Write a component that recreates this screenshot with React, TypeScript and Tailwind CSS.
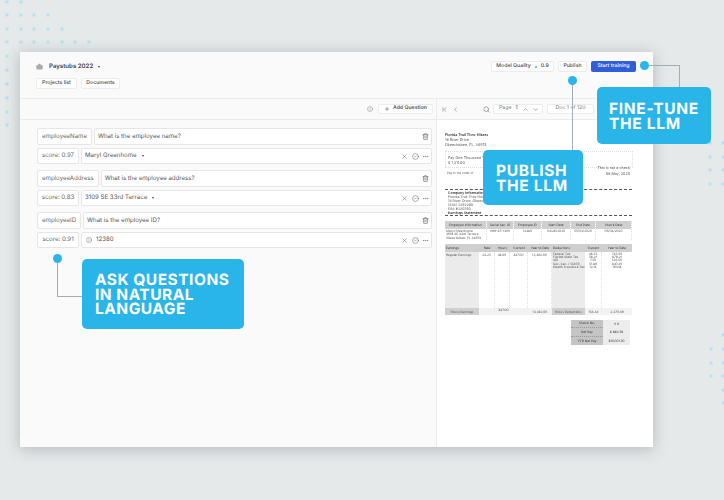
import { ChevronDown, ChevronFirst, ChevronLeft, ChevronUp, CircleCheck, Ellipsis, Info, Plus, Search, Trash2, X } from "lucide-react";

const dots: [number, number][] = [
  [7, 2], [21, 2],
  [7, 15], [21, 15], [34, 15], [48, 15],
  [7, 29], [21, 29], [34, 29], [48, 29], [62, 29],
  [7, 42], [21, 42], [34, 42], [48, 42], [62, 42], [75, 42], [89, 42],
  [7, 56], [7, 70], [7, 84], [7, 98], [7, 112], [7, 125],
  [710, 143], [723, 143], [710, 157], [723, 157], [710, 170], [723, 170], [710, 184], [723, 184],
  [723, 335], [711, 349], [723, 349], [711, 363], [723, 363], [711, 376], [723, 376], [723, 390], [723, 403],
];

const questions = [
  { key: "employeeName", question: "What is the employee name?", score: "0.97", value: "Maryl Greenhome", caret: true },
  { key: "employeeAddress", question: "What is the employee address?", score: "0.83", value: "3109 SE 33rd Terrace", caret: true },
  { key: "employeeID", question: "What is the employee ID?", score: "0.91", value: "12380", caret: false },
];

const infoColumns = [
  { head: "Employee Information", lines: ["Maryl Greenhome", "3109 SE 33rd Terrace", "Okeechobee, FL 34974"] },
  { head: "Social Sec. ID", lines: ["099-45-1300"], center: true },
  { head: "Employee ID", lines: ["12380"], center: true },
  { head: "Start Date", lines: ["04/26/2020"], center: true },
  { head: "End Date", lines: ["05/03/2020"], center: true },
  { head: "Check Date", lines: ["05/08/2020"], center: true },
];

function Caret() {
  return <span className="ml-[5px] h-0 w-0 border-x-[1.5px] border-t-[2.5px] border-x-transparent border-t-[#444]" />;
}

function QuestionBlock({ item }: { item: (typeof questions)[number] }) {
  return (
    <div className="flex flex-col gap-[3px]">
      <div className="flex h-[17px] gap-[2px]">
        <div className="flex items-center rounded-[2px] border border-[#e6e6e6] bg-white px-[4px] text-[#666]">{item.key}</div>
        <div className="flex flex-1 items-center justify-between rounded-[2px] border border-[#e6e6e6] bg-white pl-[3px] pr-[2px] text-[#555]">
          {item.question}
          <Trash2 size={7} className="text-[#666]" />
        </div>
      </div>
      <div className="flex h-[16px] gap-[2px]">
        <div className="flex w-[42px] items-center justify-center rounded-[2px] border border-[#e6e6e6] bg-white text-[#666]">score: {item.score}</div>
        <div className="flex flex-1 items-center rounded-[2px] border border-[#e6e6e6] bg-white pl-[3px] pr-[2px] text-[#555]">
          {!item.caret && <Info size={6} className="mr-[4px] ml-[1px] text-[#777]" />}
          {item.value}
          {item.caret && <Caret />}
          <div className="ml-auto flex items-center gap-[3.5px] text-[#777]">
            <X size={7} />
            <CircleCheck size={7} />
            <Ellipsis size={7} />
          </div>
        </div>
      </div>
    </div>
  );
}

function Document() {
  return (
    <div className="flex h-full flex-col pl-[8px] pt-[12px] text-[3.7px] leading-[5px] text-[#555] blur-[0.25px] [text-rendering:geometricPrecision]">
      <div className="font-semibold text-[#333]">Florida Trail Thru-Hikers</div>
      <div>18 River Drive</div>
      <div>Okeechobee, FL, 34974</div>

      <div className="mt-[4px] flex h-[17px] w-[188px] flex-col justify-between border border-dotted border-[#ddd] px-[2px] pt-[3px]">
        <div>
          <div>Pay One Thousand Three Hundred</div>
          <div>$ 1,311.00</div>
        </div>
        <div className="-mb-[1px] text-right">This is not a check</div>
      </div>
      <div className="mt-[3px] flex w-[185px] items-center justify-between pl-[2px]">
        <span className="text-[3px]">Pay to the order of</span>
        <span>08 May, 2020</span>
      </div>

      <div className="mt-[13px] w-[187px] border-t border-dashed border-[#555] pl-[3px] pt-[1px] text-[3.5px] leading-[4px]">
        <div className="font-semibold text-[#333]">Company Information</div>
        <div>Florida Trail Thru-Hikers</div>
        <div>18 River Drive, Okeechobee</div>
        <div>(888) 3292200</div>
        <div>EIN: 6320790</div>
        <div className="font-semibold text-[#333]">Earnings Statement</div>
      </div>
      <div className="w-[187px] border-t border-dashed border-[#555]" />

      <div className="mt-[5px] grid w-[187px] grid-cols-[42px_27px_28px_29px_25px_36px] text-[3.2px] leading-[4px]">
        {infoColumns.map((col) => (
          <div key={col.head} className="flex flex-col border-r border-dotted border-[#ddd]">
            <div className="flex h-[8px] items-center justify-center bg-[#cfcfcf] text-[#333]">{col.head}</div>
            <div className={`h-[11px] pt-[1px] ${col.center ? "text-center" : "pl-[1px]"}`}>
              {col.lines.map((line) => (
                <div key={line} className="leading-[3.4px]">{line}</div>
              ))}
            </div>
          </div>
        ))}
      </div>

      <div className="mt-[4px] grid w-[187px] grid-cols-[34px_16px_15px_18px_24px_33px_17px_30px] text-[3.2px] leading-[4px]">
        {["Earnings", "Rate", "Hours", "Current", "Year to Date", "Deductions", "Current", "Year to Date"].map((head, i) => (
          <div key={head + i} className={`flex h-[8px] items-center bg-[#cfcfcf] text-[#333] ${i === 0 || i === 5 ? "pl-[1px]" : "justify-center"}`}>{head}</div>
        ))}
        <div className="h-[56px] bg-[#ebebeb] pl-[1px] pt-[1px]">Regular Earnings</div>
        <div className="border-r border-dotted border-[#ddd] pt-[1px] text-center">23.25</div>
        <div className="border-r border-dotted border-[#ddd] pt-[1px] text-center">36.00</div>
        <div className="border-r border-dotted border-[#ddd] pt-[1px] text-center">837.00</div>
        <div className="border-r border-dotted border-[#ddd] pt-[1px] text-center">13,392.00</div>
        <div className="bg-[#ebebeb] pl-[1px] pt-[1px] leading-[3.2px]">
          <div>Federal Tax</div>
          <div>Florida State Tax</div>
          <div>SDI</div>
          <div>Soc. Sec. / 12400</div>
          <div>Health Insurance Tax</div>
        </div>
        <div className="border-r border-dotted border-[#ddd] pt-[1px] text-center leading-[3.2px]">
          <div>46.55</div>
          <div>56.21</div>
          <div>7.50</div>
          <div>51.89</div>
          <div>12.14</div>
        </div>
        <div className="pt-[1px] text-center leading-[3.2px]">
          <div>745.00</div>
          <div>879.21</div>
          <div>120.00</div>
          <div>830.30</div>
          <div>194.18</div>
        </div>
        <div className="flex h-[7px] items-center justify-center bg-[#cfcfcf]">Gross Earnings</div>
        <div className="col-span-3 flex items-start justify-center bg-[#f2f2f2]">837.00</div>
        <div className="flex items-center justify-center bg-[#f2f2f2]">13,392.00</div>
        <div className="flex items-center justify-center bg-[#cfcfcf]">Gross Deductions</div>
        <div className="flex items-center justify-center bg-[#f2f2f2]">154.44</div>
        <div className="flex items-center justify-center bg-[#f2f2f2]">2,470.09</div>
      </div>

      <div className="ml-[126px] mt-[5px] grid w-[59px] grid-cols-[32px_27px] grid-rows-[8px_9px_8px] text-[3.2px] text-[#333]">
        <div className="flex items-center justify-center border-b border-dotted border-[#999] bg-[#c4c4c4]">Check No.</div>
        <div className="flex items-center justify-center bg-[#ededed]"># 9</div>
        <div className="flex items-center justify-center border-b border-dotted border-[#999] bg-[#c4c4c4]">Net Pay</div>
        <div className="flex items-center justify-center bg-[#ededed]">$ 680.59</div>
        <div className="flex items-center justify-center bg-[#c4c4c4]">YTD Net Pay</div>
        <div className="flex items-center justify-center bg-[#ededed]">$10,001.50</div>
      </div>
    </div>
  );
}

export default function App() {
  return (
    <div className="relative h-[500px] w-[724px] overflow-hidden bg-[#e5e9ea] pl-[20px] pt-[52px] font-['Inter',sans-serif] text-[6.1px] [text-rendering:geometricPrecision]">
      {/* background dots */}
      <svg className="absolute left-0 top-0" width="724" height="500">
        {dots.map(([x, y]) => (
          <rect key={`${x}-${y}`} x={x - 1.5} y={y - 1.5} width="3" height="3" fill="#b3e3ec" />
        ))}
      </svg>

      <div className="relative flex h-[395px] w-[633px] flex-col bg-[#fafafa] shadow-[0_2px_14px_rgba(60,70,75,0.3)]">
        {/* Header */}
        <div className="flex h-[47px] justify-between border-b border-[#ebebeb] pl-[16px] pr-[17px] pt-[9px]">
          <div>
            <div className="flex h-[11px] items-center text-[6.1px] font-semibold text-[#444]">
              <svg width="7" height="7" viewBox="0 0 7 7" className="mr-[6px]">
                <path d="M3.5 0.5 L6 2.6 L7 2.6 L6.4 6.5 L0.6 6.5 L0 2.6 L1 2.6 Z" fill="#aaa" />
              </svg>
              Paystubs 2022
              <Caret />
            </div>
            <div className="mt-[6px] flex gap-[4px] text-[#444]">
              <div className="flex h-[11px] w-[41px] items-center justify-center rounded-[2px] border border-[#ececec] bg-white text-[5.2px] font-medium">Projects list</div>
              <div className="flex h-[11px] w-[39px] items-center justify-center rounded-[2px] border border-[#ececec] bg-white text-[5.2px] font-medium">Documents</div>
            </div>
          </div>
          <div className="flex h-[11px] gap-[4px] text-[5.2px] font-medium text-[#444]">
            <div className="flex w-[63px] items-center justify-center gap-[4px] rounded-[2px] border border-[#ececec] bg-white">
              Model Quality
              <span className="h-[2px] w-[2px] rounded-full bg-[#4cc38a]" />
              0.9
            </div>
            <div className="flex w-[29px] items-center justify-center rounded-[2px] border border-[#ececec] bg-white">Publish</div>
            <div className="flex w-[45px] items-center justify-center rounded-[2px] bg-[#2f5ed8] text-white">Start training</div>
          </div>
        </div>

        {/* Toolbar */}
        <div className="flex h-[21px] border-b border-[#ebebeb] text-[5.2px] text-[#777]">
          <div className="flex w-[417px] items-center justify-end gap-[5px] border-r border-[#ebebeb] pr-[3px]">
            <Info size={6} className="text-[#888]" />
            <div className="flex h-[10px] w-[55px] items-center justify-center gap-[3px] rounded-[2px] border border-[#ececec] bg-white font-semibold text-[#555]">
              <Plus size={6} />
              Add Question
            </div>
          </div>
          <div className="flex flex-1 items-center pl-[4px]">
            <ChevronFirst size={7} />
            <ChevronLeft size={7} className="ml-[4px]" />
            <Search size={7} className="ml-[24px]" />
            <div className="ml-[3px] flex h-[10px] w-[50px] items-center rounded-[2px] border border-[#ececec] bg-white pl-[5px]">
              Page <span className="ml-[4px] text-[#333]">1</span>
              <ChevronUp size={7} className="ml-[4px]" />
              <ChevronDown size={7} className="ml-[3px]" />
            </div>
            <div className="ml-[4px] flex h-[10px] w-[47px] items-center justify-center rounded-[2px] border border-[#ececec] bg-white">Doc 1 of 120</div>
          </div>
        </div>

        {/* Body */}
        <div className="flex min-h-0 flex-1">
          <div className="flex w-[417px] flex-col gap-[6px] border-r border-[#ebebeb] pl-[17px] pr-[4px] pt-[8px]">
            {questions.map((item) => (
              <QuestionBlock key={item.key} item={item} />
            ))}
          </div>
          <div className="flex-1 overflow-hidden bg-white">
            <Document />
          </div>
        </div>
      </div>

      {/* Connector lines */}
      <div className="absolute left-[644px] top-[65px] h-[22px] w-[36px] rounded-tr-[1px] border-r border-t border-[#9fb0b5]" />
      <div className="absolute left-[572px] top-[80px] h-[70px] border-l border-[#9fb0b5]" />
      <div className="absolute left-[57px] top-[258px] h-[39px] w-[25px] border-b border-l border-[#9fb0b5]" />
      <span className="absolute left-[639.5px] top-[60.5px] h-[9px] w-[9px] rounded-full bg-[#29b5e8]" />
      <span className="absolute left-[567.5px] top-[75.5px] h-[9px] w-[9px] rounded-full bg-[#29b5e8]" />
      <span className="absolute left-[52.5px] top-[253.5px] h-[9px] w-[9px] rounded-full bg-[#29b5e8]" />

      {/* Callouts */}
      <div className="absolute left-[597px] top-[87px] flex h-[57px] w-[114px] items-center rounded-[5px] bg-[#29b5e8] pl-[12px] text-[15.5px] font-bold leading-[15px] tracking-[0.7px] text-white">
        <div>FINE-TUNE<br />THE LLM</div>
      </div>
      <div className="absolute left-[483px] top-[150px] flex h-[55px] w-[100px] items-center rounded-[5px] bg-[#29b5e8] pl-[13px] text-[15.5px] font-bold leading-[15px] tracking-[0.7px] text-white">
        <div>PUBLISH<br />THE LLM</div>
      </div>
      <div className="absolute left-[82px] top-[259px] flex h-[70px] w-[162px] items-center rounded-[5px] bg-[#29b5e8] pl-[13px] pt-[2px] text-[15.5px] font-bold leading-[14.5px] tracking-[0.5px] text-white">
        <div>ASK QUESTIONS<br />IN NATURAL<br />LANGUAGE</div>
      </div>
    </div>
  );
}
